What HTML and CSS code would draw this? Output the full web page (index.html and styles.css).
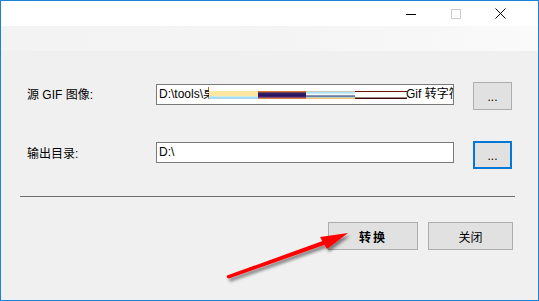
FILE: index.html
```html
<!DOCTYPE html>
<html lang="zh-CN">
<head>
  <meta charset="UTF-8">
  <title>Gif 转字符</title>
  <link rel="stylesheet" href="styles.css">
</head>
<body>
  <div class="window">
    <div class="titlebar">
      <span class="tb-btn">
        <svg width="10" height="10" viewBox="0 0 10 10"><path d="M0 5.5H10" stroke="#000" stroke-width="1"/></svg>
      </span>
      <span class="tb-btn">
        <svg width="10" height="10" viewBox="0 0 10 10"><rect x="0.5" y="0.5" width="9" height="9" fill="none" stroke="#cccccc"/></svg>
      </span>
      <span class="tb-btn">
        <svg width="11" height="11" viewBox="0 0 11 11"><path d="M0.5 0.5L10.5 10.5M10.5 0.5L0.5 10.5" stroke="#000" stroke-width="1"/></svg>
      </span>
    </div>
    <div class="band"></div>

    <div class="form">
      <div class="row row-src">
        <label class="label">源 GIF 图像:</label>
        <div class="field">
          <span>D:\tools\</span><span class="cut">桌</span><span class="strip s1"></span><span class="strip s2"></span><span class="strip s3"></span><span class="strip s4"></span><span class="tail">Gif 转字符</span>
        </div>
        <button class="btn small">...</button>
      </div>

      <div class="row row-out">
        <label class="label">输出目录:</label>
        <div class="field">D:\</div>
        <button class="btn small focused">...</button>
      </div>

      <div class="sep"></div>

      <div class="actions">
        <button class="btn wide bold">转换</button>
        <button class="btn wide2">关闭</button>
      </div>
    </div>

    <svg class="arrow" width="539" height="301" viewBox="0 0 539 301">
      <defs>
        <filter id="shadow" x="-20%" y="-50%" width="140%" height="200%">
          <feDropShadow dx="2" dy="3" stdDeviation="1.6" flood-color="#000" flood-opacity="0.45"/>
        </filter>
      </defs>
      <g filter="url(#shadow)" fill="#ff0000">
        <path d="M227 275.5 L324 240.5 L325.5 244.5 L229 278.5 Q226 278.5 227 275.5 Z"/>
        <path d="M348 233 L320 237 L327 249 Z"/>
      </g>
    </svg>
  </div>
</body>
</html>
```

FILE: styles.css
```css
* {
  margin: 0;
  padding: 0;
  box-sizing: border-box;
}

body {
  background: #f0f0f0;
  font-family: "Liberation Sans", "Noto Sans CJK SC", sans-serif;
  font-size: 12px;
  color: #000;
}

.window {
  position: relative;
  width: 539px;
  height: 301px;
  border: 1px solid #1883d7;
  background: #f0f0f0;
  overflow: hidden;
}

.titlebar {
  height: 25px;
  background: #fff;
  display: flex;
  justify-content: flex-end;
  padding-right: 15px;
}

.tb-btn {
  width: 45px;
  display: flex;
  align-items: center;
  justify-content: center;
}

.band {
  height: 25px;
  background: linear-gradient(90deg, #f3f3f3 0%, #f4f4f4 50%, #fafafa 100%);
}

.form {
  padding: 31px 0 0 26px;
}

.row {
  display: flex;
  align-items: flex-start;
  height: 28px;
}

.row-out {
  margin-top: 31px;
}

.label {
  width: 129px;
  line-height: 24px;
  margin-top: 1px;
}

.field {
  width: 298px;
  height: 21px;
  margin-top: 2px;
  border: 1px solid #7a7a7a;
  background: #fff;
  padding-left: 2px;
  display: flex;
  align-items: center;
  white-space: nowrap;
  overflow: hidden;
  line-height: 19px;
}

.row-out .field {
  margin-top: 1px;
}

.cut {
  display: inline-block;
  width: 6px;
  overflow: hidden;
  flex-shrink: 0;
}

.strip {
  flex-shrink: 0;
  height: 8px;
  margin-top: 1px;
}

.s1 {
  width: 49px;
  background: linear-gradient(#fde7a2 0, #fde7a2 5px, #f9f3df 5px, #a6dcf4 6px, #a6dcf4 8px);
}

.s2 {
  width: 48px;
  background: linear-gradient(#e58a3c 0, #c4602a 1px, #3a1f6e 2px, #22125a 5px, #5a3090 6px, #c06a3a 7px, #e79a55 8px);
}

.s3 {
  width: 49px;
  background: linear-gradient(#f2c27a 0, #9ed8f3 1px, #dff3fc 3px, #ffffff 4px, #1e2a66 5px, #9ed8f3 6px, #f2c27a 7px, #f2c27a 8px);
}

.s4 {
  width: 52px;
  background: linear-gradient(#6b1212 0, #6b1212 1px, #ffffff 1px, #ffffff 6px, #3a0a0a 7px, #3a0a0a 8px);
}

.tail {
  flex-shrink: 0;
  margin-left: -1px;
}

.btn {
  height: 28px;
  border: 1px solid #adadad;
  background: #e1e1e1;
  font-family: "Liberation Sans", "Noto Sans CJK SC", sans-serif;
  font-size: 12px;
  color: #000;
}

.small {
  width: 39px;
  margin-left: 19px;
  padding-top: 2px;
}

.focused {
  border: 2px solid #0078d7;
}

.sep {
  margin: 27px 0 0 -7px;
  width: 495px;
  height: 1px;
  background: #6e6e6e;
}

.actions {
  display: flex;
  justify-content: flex-end;
  gap: 10px;
  margin-top: 25px;
  padding-right: 25px;
}

.wide {
  width: 90px;
  letter-spacing: 2px;
}

.wide2 {
  width: 85px;
}

.bold {
  font-weight: bold;
}

.arrow {
  position: absolute;
  left: -1px;
  top: -1px;
  pointer-events: none;
}
```
